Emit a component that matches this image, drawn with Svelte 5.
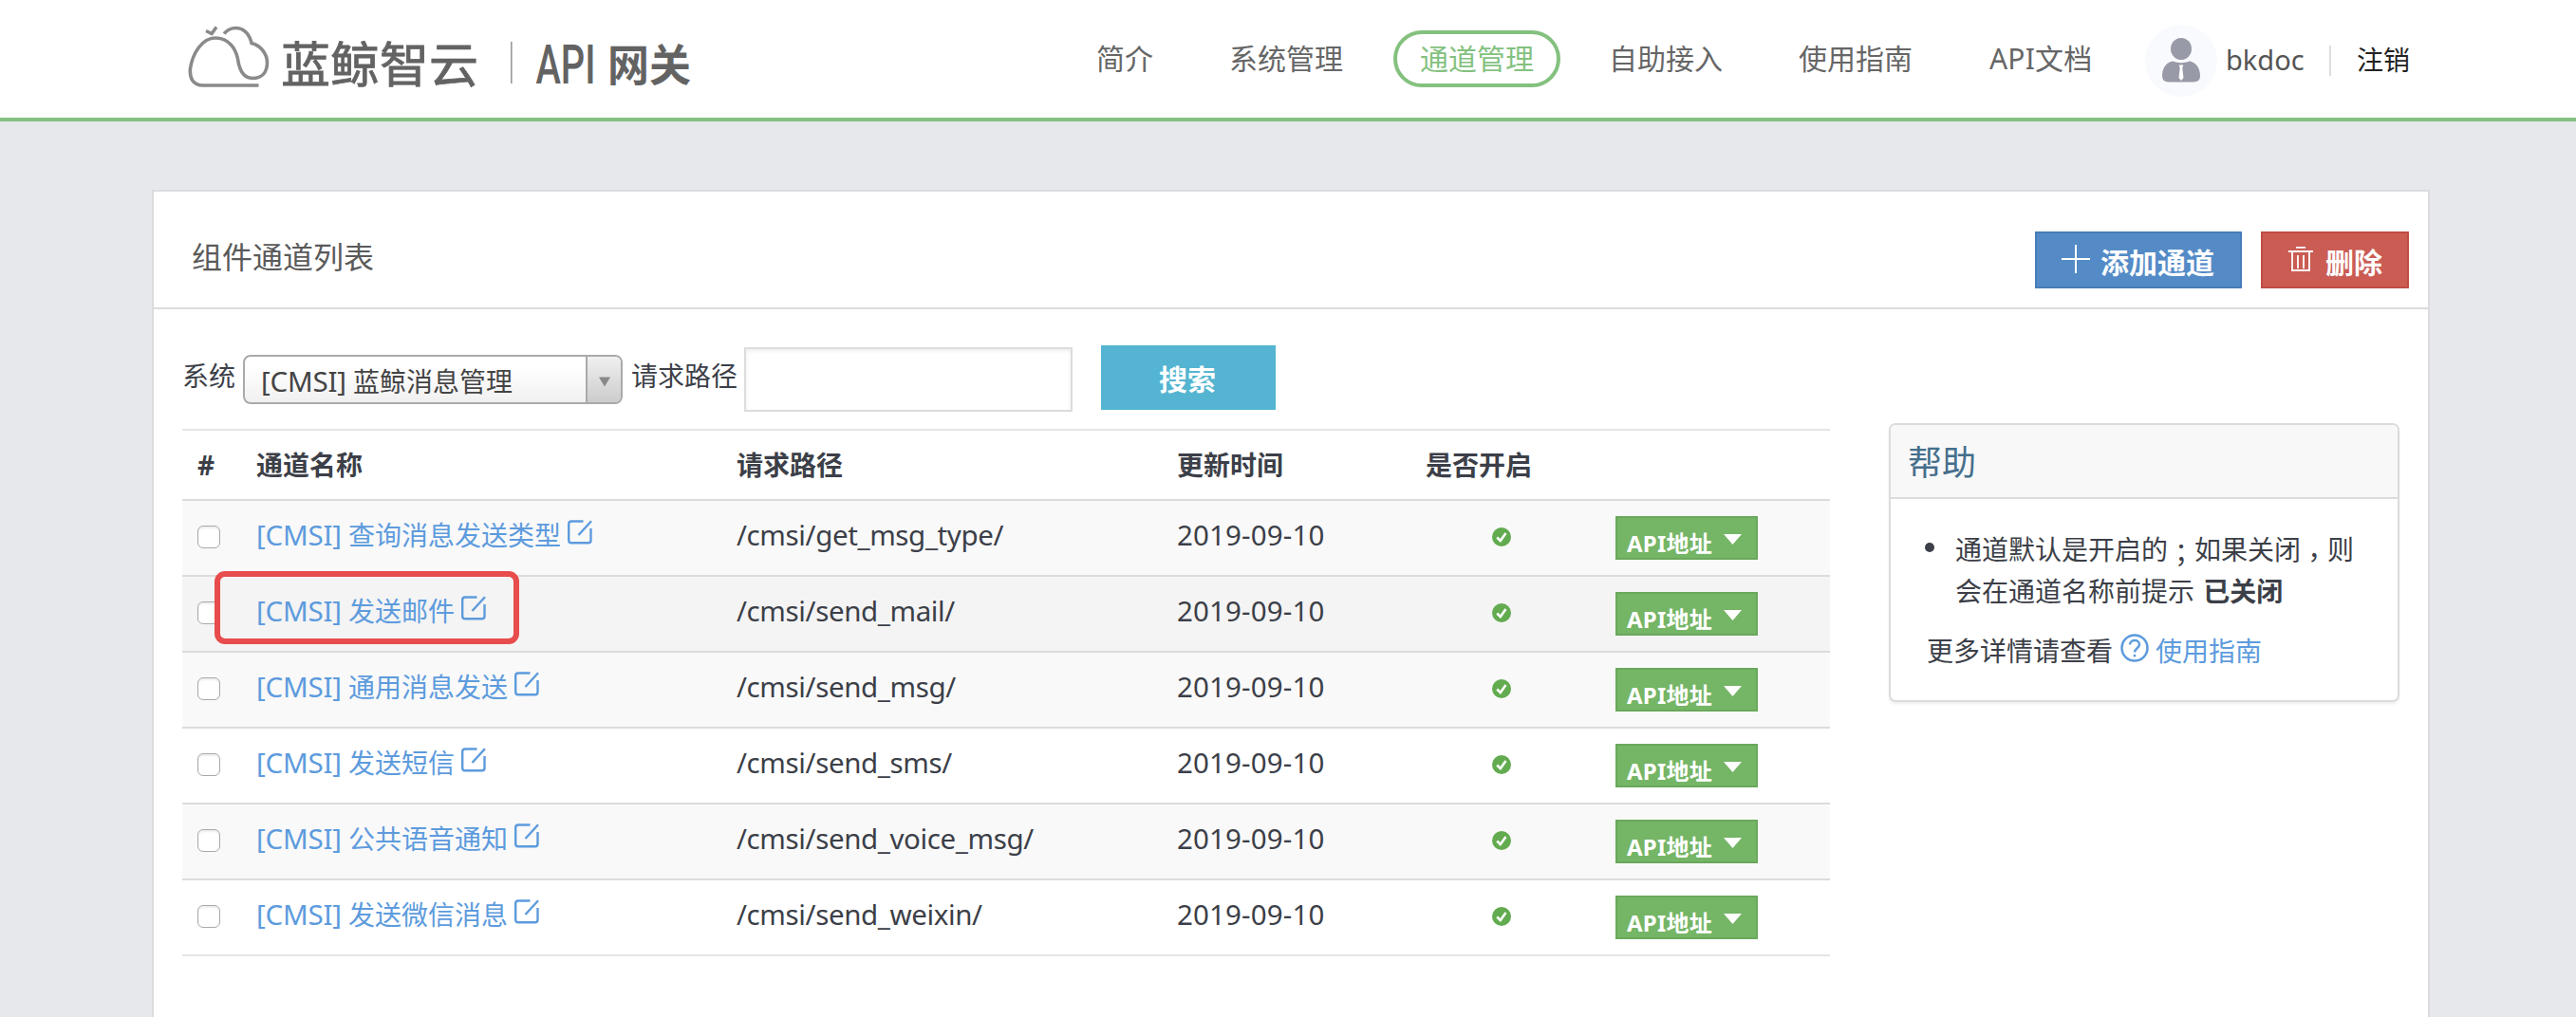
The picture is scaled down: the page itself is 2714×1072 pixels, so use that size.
<script>
  const navItems = [
    { label: '简介' },
    { label: '系统管理' },
    { label: '通道管理', active: true },
    { label: '自助接入' },
    { label: '使用指南' },
    { label: 'API文档' }
  ];

  const channels = [
    { name: '查询消息发送类型', path: '/cmsi/get_msg_type/', date: '2019-09-10' },
    { name: '发送邮件', path: '/cmsi/send_mail/', date: '2019-09-10', hover: true },
    { name: '通用消息发送', path: '/cmsi/send_msg/', date: '2019-09-10' },
    { name: '发送短信', path: '/cmsi/send_sms/', date: '2019-09-10' },
    { name: '公共语音通知', path: '/cmsi/send_voice_msg/', date: '2019-09-10' },
    { name: '发送微信消息', path: '/cmsi/send_weixin/', date: '2019-09-10' }
  ];
</script>

<div class="page">
  <header>
    <svg class="logo" viewBox="198 20 534 80" width="534" height="80">
      <g fill="none" stroke="#8a8a8a" stroke-width="3.6">
        <path d="M272.500 90H214C203 90 199.500 82 200.500 72C203 56 213 40 227 40C240 40 248 50 250.500 62C252 73 256 82.500 266 82.500C276 82.500 281.500 76 281.500 66C281.500 57 275 48 265 45.500C263 36 257 29.500 248.500 29.500C243 29.500 239 32 236 35.500" />
        <path d="M217 32.500L223 35.500L228 28.500" />
      </g>
      <g fill="#636363">
        <text class="brand" x="296" y="87" textLength="208" lengthAdjust="spacingAndGlyphs">蓝鲸智云</text>
        <rect x="538" y="44" width="1.600" height="44" fill="#999" />
        <text class="api" x="564.500" y="88" textLength="63" lengthAdjust="spacingAndGlyphs">API</text>
        <text class="gate" x="640" y="85" textLength="88" lengthAdjust="spacingAndGlyphs">网关</text>
      </g>
    </svg>
    <nav>
      {#each navItems as item}
        <a class:active={item.active}>{item.label}</a>
      {/each}
    </nav>
    <div class="user">
      <svg class="avatar" viewBox="0 0 76 76" width="76" height="76">
        <circle cx="38" cy="38" r="38" fill="#f9fafd" />
        <g fill="#989aa8">
          <ellipse cx="38" cy="25.500" rx="11" ry="11.500" />
          <path d="M29 38.500Q38 42 47 38.500C54 40 58 46 58 54Q58 60.500 51 60.500H25Q18 60.500 18 54C18 46 22 40 29 38.500Z" />
        </g>
        <path d="M35.800 42.500H40.200L39.300 46L40.500 56L38 59L35.500 56L36.700 46Z" fill="#fff" />
      </svg>
      <span class="uname">bkdoc</span>
      <span class="vline"></span>
      <span class="logout">注销</span>
    </div>
  </header>

  <main>
    <div class="title-bar">
      <h1>组件通道列表</h1>
      <button class="btn add">
        <svg viewBox="0 0 30 30" width="30" height="30" fill="none" stroke="#fff" stroke-width="2"><path d="M15 0V30M0 15H30" /></svg>
        <span>添加通道</span>
      </button>
      <button class="btn del">
        <svg viewBox="0 0 26 28" width="26" height="28" fill="none" stroke="#fff" stroke-width="1.800"><path d="M0 6H26M8 1.800H18M4 6V26H22V6M10 10V24M16 10V24" /></svg>
        <span>删除</span>
      </button>
    </div>

    <div class="body">
      <section class="left">
        <div class="filters">
          <label>系统</label>
          <div class="select">
            <span class="value"><span class="tag">[CMSI]</span> 蓝鲸消息管理</span>
            <span class="arrow"><svg viewBox="0 0 12 10" width="12" height="11"><path d="M0 0H12L6 10Z" fill="#888" /></svg></span>
          </div>
          <label class="second">请求路径</label>
          <input type="text" />
          <button class="search">搜索</button>
        </div>

        <div class="table">
          <div class="row head">
            <span class="num">#</span>
            <span>通道名称</span>
            <span>请求路径</span>
            <span>更新时间</span>
            <span>是否开启</span>
            <span></span>
          </div>
          {#each channels as c}
            <div class="row" class:hover={c.hover}>
              <span class="check"></span>
              <a class="name">
                <span class="tag">[CMSI]</span> {c.name}
                <svg viewBox="0 0 26 26" width="26" height="26" fill="none" stroke="#5d9bdd" stroke-width="2.400"><path d="M16.500 1.500H4Q1.200 1.500 1.200 4.300V21.500Q1.200 24.300 4 24.300H21.700Q24.500 24.300 24.500 21.500V9M11.500 16L25 1.200" /></svg>
              </a>
              <span class="path">{c.path}</span>
              <span class="date">{c.date}</span>
              <span class="state">
                <svg viewBox="0 0 20 20" width="20" height="20"><circle cx="10" cy="10" r="10" fill="#62ab4f" /><path d="M5.200 10.500L8.800 14L14.500 6" fill="none" stroke="#fff" stroke-width="2.600" /></svg>
              </span>
              <button class="api-btn">
                <span>API地址</span>
                <svg viewBox="0 0 19 11" width="19" height="11"><path d="M0 0H19L9.500 11Z" fill="#fff" /></svg>
              </button>
              {#if c.hover}<i class="marker"></i>{/if}
            </div>
          {/each}
        </div>
      </section>

      <aside>
        <h2>帮助</h2>
        <div class="help">
          <ul>
            <li>通道默认是开启的<span class="punct semi">；</span>如果关闭<span class="punct">，</span>则会在通道名称前提示 <b>已关闭</b></li>
          </ul>
          <p>
            <span>更多详情请查看</span>
            <svg viewBox="0 0 30 30" width="30" height="30" fill="none" stroke="#5d9bdd" stroke-width="2.500"><circle cx="15" cy="15" r="13.500" /><path d="M10 11.500C10 5.500 20 5.500 20 11.500C20 15 15 15.500 15 19.500" /><path d="M15 21.800V24.400" /></svg>
            <a>使用指南</a>
          </p>
        </div>
      </aside>
    </div>
  </main>
</div>

<style>
  :global(body) {
    background: #e6e8ec;
  }
  .page {
    width: 2714px;
    height: 1072px;
    overflow: hidden;
    background: #e6e8ec;
    font-family: 'Noto Sans', 'Noto Sans CJK SC', sans-serif;
    font-size: 28px;
    color: #3c3f48;
    box-sizing: border-box;
  }
  .page * {
    box-sizing: border-box;
  }
  button,
  input {
    font-family: inherit;
    margin: 0;
    padding: 0;
    border-radius: 0;
  }
  svg {
    display: block;
    flex: none;
  }
  header {
    height: 128px;
    background: #fff;
    border-bottom: 4px solid #84c17f;
    display: flex;
    align-items: flex-start;
    padding-left: 198px;
  }
  .logo {
    margin-top: 20px;
    overflow: visible;
  }
  .brand {
    font-family: 'Noto Sans CJK SC', sans-serif;
    font-size: 51px;
    font-weight: 400;
    stroke: #636363;
    stroke-width: 0.8px;
  }
  .api {
    font-family: Roboto, sans-serif;
    font-size: 57px;
    font-weight: 500;
  }
  .gate {
    font-family: 'Noto Sans CJK SC', sans-serif;
    font-size: 46px;
    font-weight: 700;
  }
  nav {
    display: flex;
    gap: 24px;
    margin: 32px 0 0 395px;
    width: 1106px;
  }
  nav a {
    height: 60px;
    line-height: 52px;
    padding: 0 24px;
    border: 4px solid transparent;
    border-radius: 30px;
    font-size: 30px;
    color: #666;
    white-space: nowrap;
  }
  nav a.active {
    border-color: #84c17f;
    color: #84c17f;
    margin: 0 -1px 0 1px;
  }
  nav a:last-child {
    margin-left: 1px;
    letter-spacing: 0.200px;
  }
  .user {
    display: flex;
    align-items: center;
    margin: 26px 0 0 27px;
    height: 76px;
  }
  .uname {
    font-size: 29px;
    color: #555;
    margin-left: 9px;
    width: 83px;
    padding-bottom: 3px;
  }
  .vline {
    width: 2px;
    height: 32px;
    margin-left: 26px;
    background: #ddd;
  }
  .logout {
    margin-left: 27px;
    padding-bottom: 4px;
    color: #222;
  }
  main {
    width: 2400px;
    height: 900px;
    margin: 72px 0 0 160px;
    background: #fff;
    border: 2px solid #dcdcde;
  }
  .title-bar {
    height: 124px;
    border-bottom: 2px solid #dcdcde;
    display: flex;
    align-items: flex-start;
    padding: 42px 20px 0 40px;
  }
  h1 {
    margin: 0;
    flex: 1;
    font-size: 32px;
    font-weight: 400;
    line-height: 54px;
    color: #5a5a5a;
  }
  .btn {
    height: 60px;
    display: flex;
    color: #fff;
    font-size: 30px;
    font-weight: 700;
    line-height: 62px;
  }
  .add {
    width: 218px;
    background: #548bc6;
    border: 2px solid #457db8;
    padding-left: 26px;
    gap: 11px;
  }
  .add svg {
    margin-top: 12px;
  }
  .del {
    width: 156px;
    margin-left: 20px;
    background: #ca5c54;
    border: 2px solid #c14b43;
    padding-left: 27px;
    gap: 13px;
  }
  .del svg {
    margin-top: 13px;
  }
  .body {
    display: flex;
    align-items: flex-start;
    padding-left: 30px;
  }
  .left {
    width: 1736px;
  }
  .filters {
    height: 126px;
    padding-top: 38px;
    display: flex;
    align-items: flex-start;
  }
  label {
    width: 64px;
    line-height: 64px;
  }
  label.second {
    width: 119px;
    margin-left: 9px;
  }
  .select {
    margin-top: 10px;
    width: 400px;
    height: 52px;
    display: flex;
    border: 2px solid #aaa;
    border-radius: 8px;
    background: linear-gradient(#fff 20%, #fafafa 50%, #f0f0f0 100%);
    overflow: hidden;
    color: #444;
  }
  .value {
    flex: 1;
    line-height: 51px;
    padding-left: 17px;
    white-space: nowrap;
  }
  .arrow {
    width: 37px;
    border-left: 2px solid #aaa;
    background: linear-gradient(#f0f0f0, #ccc);
    display: flex;
    align-items: center;
    justify-content: center;
    padding-top: 4px;
  }
  input {
    width: 346px;
    height: 68px;
    margin-top: 2px;
    border: 2px solid #dcdcdc;
    box-shadow: inset 0 2px 4px rgba(0, 0, 0, 0.07);
    background: #fff;
  }
  .search {
    width: 184px;
    height: 68px;
    margin-left: 30px;
    padding-right: 2px;
    border: 0;
    background: #54b4d1;
    color: #fff;
    font-size: 30px;
    font-weight: 700;
    line-height: 71px;
  }
  .row {
    position: relative;
    height: 80px;
    display: grid;
    grid-template-columns: 78px 506px 464px 262px 200px 1fr;
    border-bottom: 2px solid #dcdcdc;
    line-height: 71px;
    white-space: nowrap;
  }
  .row:nth-child(2),
  .row:nth-child(4),
  .row:nth-child(6) {
    background: #f9f9f9;
  }
  .row.hover {
    background: #f4f4f4;
  }
  .row:last-child {
    border-bottom-color: #e5e5e8;
  }
  .head {
    height: 76px;
    border-top: 2px solid #e5e5e5;
    font-weight: 700;
    line-height: 73px;
  }
  .num {
    padding-left: 16px;
  }
  .tag {
    font-size: 29.500px;
    letter-spacing: -0.200px;
  }
  .path {
    font-size: 29.500px;
    letter-spacing: -0.380px;
  }
  .date {
    font-size: 29.500px;
    letter-spacing: 0.150px;
  }
  .check {
    width: 24px;
    height: 24px;
    margin: 26px 0 0 16px;
    border: 1.500px solid #a9a9a9;
    border-radius: 6px;
    background: #fff;
    box-shadow: inset 0 2px 2px rgba(0, 0, 0, 0.07);
  }
  a {
    color: #5d9bdd;
  }
  .name svg {
    display: inline-block;
    vertical-align: 1px;
  }
  .state {
    padding: 28px 0 0 70px;
  }
  .api-btn {
    width: 150px;
    height: 46px;
    margin-top: 16px;
    padding-left: 10px;
    display: flex;
    background: #75b566;
    border: 2px solid #6aa85b;
    color: #fff;
    font-size: 24px;
    font-weight: 700;
    line-height: 54px;
  }
  .api-btn span {
    width: 102px;
    text-align: left;
    letter-spacing: 0.200px;
  }
  .api-btn svg {
    margin-top: 17px;
  }
  /* Frame around the selected channel, drawn over the row's borders */
  .marker {
    position: absolute;
    left: 34px;
    top: -6px;
    width: 321px;
    height: 77px;
    border: 6px solid #e84c4c;
    border-radius: 11px;
  }
  aside {
    width: 538px;
    height: 294px;
    margin: 120px 0 0 62px;
    border: 2px solid #dcdcdc;
    border-radius: 7px;
    box-shadow: 0 2px 3px rgba(0, 0, 0, 0.07);
    overflow: hidden;
  }
  h2 {
    margin: 0;
    height: 78px;
    padding-left: 18px;
    background: #f8f8f8;
    border-bottom: 2px solid #dcdcdc;
    color: #456f8c;
    font-size: 36px;
    font-weight: 400;
    line-height: 80px;
  }
  .help {
    padding: 30px 38px 0;
    line-height: 44px;
  }
  ul {
    margin: 0;
    padding: 0;
    list-style: none;
  }
  li {
    width: 424px;
    margin-left: 30px;
  }
  li::before {
    content: '';
    float: left;
    width: 10px;
    height: 10px;
    margin: 16px 0 0 -32px;
    border-radius: 5px;
    background: #3c3f48;
  }
  li b {
    margin-left: 2px;
  }
  /* Centred full-width punctuation, dropped to the baseline */
  .punct {
    font-family: 'Noto Sans CJK TC', sans-serif;
    position: relative;
    top: 8px;
  }
  .punct.semi {
    top: 4px;
  }
  p {
    margin: 19px 0 0;
    display: flex;
  }
  p svg {
    margin: 4px 7px 0 8px;
  }
</style>
